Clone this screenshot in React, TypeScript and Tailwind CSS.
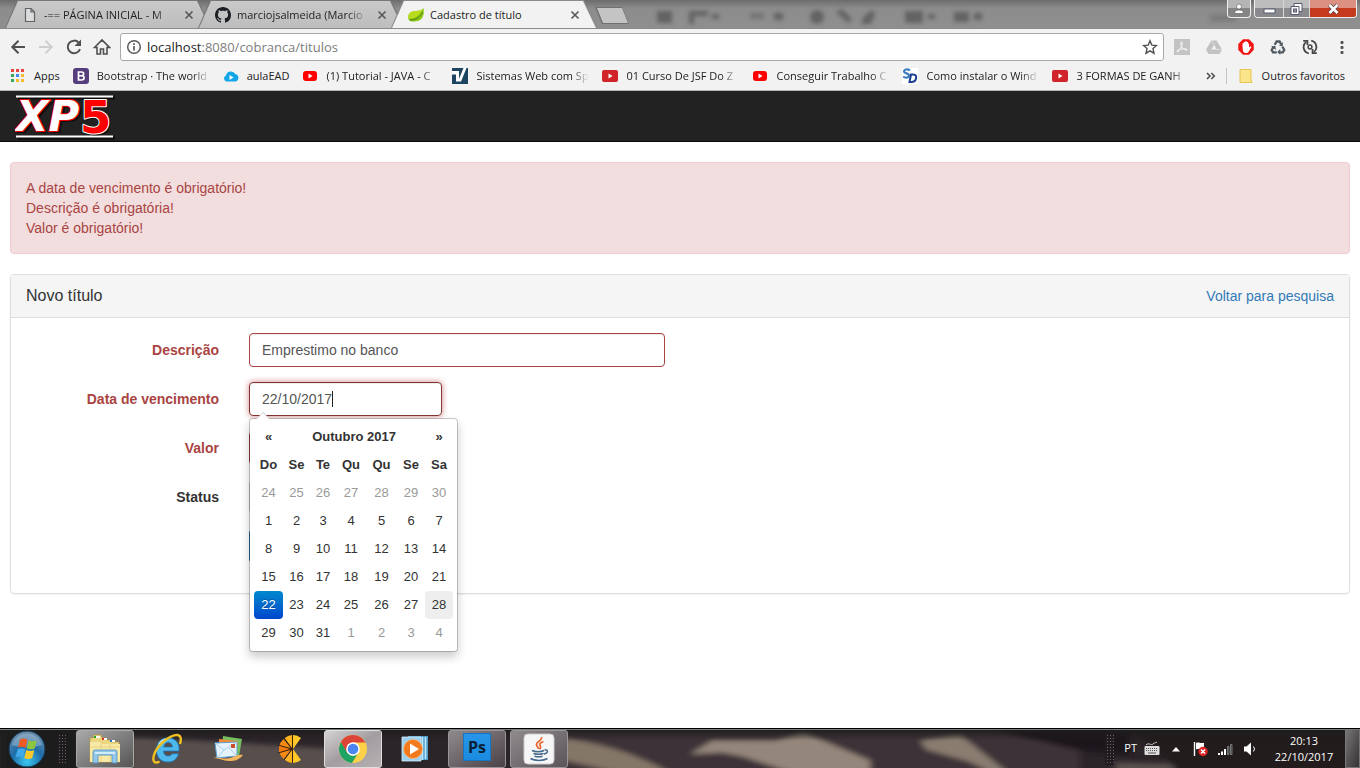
import React from "react";

const YouTube = ({ dark = false }: { dark?: boolean }) => (
  <svg width="16" height="16" viewBox="0 0 16 16" aria-hidden="true">
    <rect x={dark ? 0 : 1} y={dark ? 2 : 3} width={dark ? 16 : 14} height={dark ? 12 : 10} rx={dark ? 2 : 3} fill={dark ? "#d0242a" : "#f00"} />
    <path d="M6.5 5.5 10.6 8 6.5 10.5z" fill="#fff" />
  </svg>
);

const BootstrapIcon = () => (
  <svg width="16" height="16" viewBox="0 0 16 16" aria-hidden="true">
    <rect width="16" height="16" rx="3" fill="#563d7c" />
    <path
      d="M5.5 4h3c1.4 0 2.2.6 2.2 1.8 0 .9-.6 1.5-1.3 1.8 1 .2 1.7.9 1.7 2 0 1.5-1.1 2.4-2.7 2.4H5.5z"
      fill="none"
      stroke="#fff"
      strokeWidth="1.7"
    />
    <path d="M5.5 7.7h3.5" stroke="#fff" strokeWidth="1.5" />
  </svg>
);

const CloudIcon = () => (
  <svg width="16" height="16" viewBox="0 0 16 16" aria-hidden="true">
    <path d="M3.2 13.500A3.200 3.200 0 0 1 3 7.500 5 5 0 0 1 12.300 6 3.900 3.900 0 0 1 12.800 13.500z" fill="#12a5e8" />
    <path d="M6.500 7 10.500 9.500 6.500 12z" fill="#fff" />
  </svg>
);

const VIcon = () => (
  <svg width="16" height="16" viewBox="0 0 16 16" aria-hidden="true">
    <rect width="16" height="16" fill="#1d4460" />
    <path d="M0 3h7v8L11.500 0H14.500L9 13.500H4V6.500H0z" fill="#fff" />
  </svg>
);

const SDIcon = () => (
  <svg width="16" height="16" viewBox="0 0 16 16" aria-hidden="true">
    <rect width="16" height="16" fill="#fff" />
    <path d="M8 2.500C6 .8 2 1.200 2 3.500s5 1.500 5 4-3.800 2.700-5.800 1" fill="none" stroke="#3f7fc0" strokeWidth="2.200" />
    <path d="M9 6.500h2c3 0 3.500 1.500 3 4s-2 3.500-4.500 3.500H7.500z" fill="none" stroke="#1c3f94" strokeWidth="2" />
  </svg>
);

const AppsIcon = () => (
  <svg width="16" height="16" viewBox="0 0 16 16" aria-hidden="true">
    {["#e8453c", "#e8453c", "#e8453c", "#3aa757", "#4688f1", "#f9bb2d", "#3aa757", "#f9bb2d", "#f9bb2d"].map((c, i) => (
      <rect key={i} x={1 + (i % 3) * 5} y={1 + Math.floor(i / 3) * 5} width="3" height="3" fill={c} />
    ))}
  </svg>
);

const CloseX = () => (
  <svg width="10" height="10" viewBox="0 0 10 10" aria-hidden="true">
    <path d="M1.500 1.500 8.500 8.500M8.500 1.500 1.500 8.500" stroke="#5a5a5a" strokeWidth="1.700" />
  </svg>
);

const PageIcon = () => (
  <svg width="16" height="16" viewBox="0 0 16 16" aria-hidden="true">
    <path d="M3.500 1.500h5.500l3.500 3.500v9.500h-9zM9 1.500V5h3.500" fill="#dcdcdc" stroke="#5f6368" strokeWidth="1.200" />
  </svg>
);

const GithubIcon = () => (
  <svg width="16" height="16" viewBox="0 0 16 16" aria-hidden="true">
    <path
      fill="#1b1f23"
      d="M8 0C3.580 0 0 3.580 0 8c0 3.540 2.290 6.530 5.470 7.590.4.070.55-.17.55-.38 0-.19-.010-.82-.010-1.490-2.010.37-2.530-.49-2.690-.94-.090-.23-.48-.94-.82-1.130-.28-.15-.68-.52-.010-.53.63-.010 1.080.58 1.230.82.72 1.210 1.870.87 2.330.66.070-.52.28-.87.51-1.070-1.780-.2-3.640-.89-3.640-3.950 0-.87.31-1.590.82-2.150-.080-.2-.36-1.020.080-2.120 0 0 .67-.21 2.200.82.64-.18 1.320-.27 2-.27s1.360.090 2 .27c1.530-1.040 2.200-.82 2.200-.82.44 1.100.16 1.920.080 2.120.51.56.82 1.270.82 2.150 0 3.070-1.870 3.750-3.650 3.950.29.25.54.73.54 1.480 0 1.070-.010 1.930-.010 2.200 0 .21.15.46.55.38A8.010 8.010 0 0 0 16 8c0-4.420-3.580-8-8-8z"
    />
  </svg>
);

const LeafIcon = () => (
  <svg width="16" height="16" viewBox="0 0 16 16" aria-hidden="true">
    <path d="M15.500 1C16.500 8 15 14 7 14.500 1 15 0 12.500.3 9.500.8 5.500 4 4 8 4c3.500 0 6-.8 7.500-3z" fill="#8cc614" />
    <path d="M15.500 1C14 3.200 11.500 4 8 4 4 4 .8 5.500.3 9.500l.2 2C6 12 12 9 15.500 1z" fill="#b9dc1f" />
    <path d="M2 13C8 13 12.500 10 14.500 5" stroke="#4e7d12" fill="none" />
  </svg>
);

type TabProps = { icon: React.ReactNode; title: string; active?: boolean; first?: boolean };

const Tab = ({ icon, title, active, first }: TabProps) => (
  <div
    className={`relative h-[28px] w-[206px] shrink-0 px-px pt-px [clip-path:polygon(0_100%,12px_0,193px_0,100%_100%)] ${
      first ? "" : "-ml-[13px]"
    } ${active ? "z-10 bg-[#8a8a8a]" : "bg-[#777]"}`}
  >
    <div
      className={`flex h-full items-center gap-[6px] pl-[16px] pr-[16px] [clip-path:polygon(0_100%,12px_0,191px_0,100%_100%)] ${
        active ? "bg-[#f2f2f2]" : "bg-gradient-to-b from-[#c9c9c9] to-[#bdbdbd]"
      }`}
    >
      <span className="shrink-0">{icon}</span>
      <span
        className={`w-[132px] shrink-0 whitespace-nowrap text-[11px] leading-4 text-[#222] ${
          active ? "" : "[mask-image:linear-gradient(to_right,black_84%,transparent)]"
        }`}
      >
        {title}
      </span>
      <button type="button" aria-label="Fechar guia" className="ml-auto shrink-0">
        <CloseX />
      </button>
    </div>
  </div>
);

const WindowControls = () => (
  <div className="flex items-start gap-[3px] pr-[3px]">
    <button type="button" aria-label="Perfil" className="flex h-[18px] w-[24px] items-center justify-center rounded-b-[4px] border border-t-0 border-[#f0f0f0] bg-gradient-to-b from-[#b5b5b5] from-50% to-[#858585] to-50%">
      <svg width="12" height="12" viewBox="0 0 12 12" aria-hidden="true">
        <path d="M6 1a2.400 2.400 0 0 1 2.400 2.500C8.400 5 7.500 6 6 6S3.600 5 3.600 3.500A2.400 2.400 0 0 1 6 1zM1.500 10.500C1.500 8 3 7 6 7s4.500 1 4.500 3.500z" fill="#fff" stroke="#555" strokeWidth=".6" />
      </svg>
    </button>
    <div className="flex h-[18px] overflow-hidden rounded-b-[4px] border border-t-0 border-[#f0f0f0]">
      <button type="button" aria-label="Minimizar" className="flex w-[28px] items-center justify-center bg-gradient-to-b from-[#bdbdbd] from-50% to-[#8a8a8e] to-50%">
        <svg width="13" height="12" viewBox="0 0 13 12" aria-hidden="true">
          <rect x="1" y="6" width="11" height="4" fill="#fff" stroke="#555a70" />
        </svg>
      </button>
      <button type="button" aria-label="Restaurar" className="flex w-[27px] items-center justify-center border-x border-[#d8d8d8] bg-gradient-to-b from-[#bdbdbd] from-50% to-[#8a8a8e] to-50%">
        <svg width="13" height="12" viewBox="0 0 13 12" aria-hidden="true">
          <path d="M4 .5h8v8H4z" fill="#fff" stroke="#555a70" />
          <path d="M1 3.500h8v8H1z" fill="#fff" stroke="#555a70" />
          <rect x="3.500" y="6" width="3" height="3" fill="#999" stroke="#555a70" />
        </svg>
      </button>
      <button type="button" aria-label="Fechar" className="flex w-[46px] items-center justify-center bg-gradient-to-b from-[#dc9082] from-50% to-[#c5391c] to-50%">
        <svg width="13" height="12" viewBox="0 0 13 12" aria-hidden="true">
          <path d="M2.500 2 10.500 10M10.500 2 2.500 10" stroke="#5b4450" strokeWidth="4" />
          <path d="M2.500 2 10.500 10M10.500 2 2.500 10" stroke="#fff" strokeWidth="2.500" />
        </svg>
      </button>
    </div>
  </div>
);

const TabStrip = () => (
  <div className="relative flex h-[29px] items-end overflow-hidden border-b border-[#8a8a8a] bg-gradient-to-b from-[#6d6d6d] via-[#8c8c8c] via-30% to-[#8f8f8f]">
    <svg className="absolute left-[590px] top-0" width="660" height="28" viewBox="0 0 660 28" aria-hidden="true">
      <defs>
        <filter id="haze" x="-10%" y="-50%" width="120%" height="200%">
          <feGaussianBlur stdDeviation="2.200" />
        </filter>
      </defs>
      <g filter="url(#haze)" fill="#555" opacity=".75">
        <path d="M67 11h15v12H67zM315 11h18v12h-18zM364 12h15v10h-15z" />
        <path d="M99 11h19v5h-14v8h-5zM122 14h7v5h-7zM184 13h9v7h-9zM338 14h7v5h-7zM384 13h8v7h-8z" />
        <circle cx="227" cy="17" r="7" />
        <path d="m246 12 12 11 4-4-10-10zM272 19l9-9 4 3-4 11h-9z" />
        <path d="M160 13h14v6h-14z" opacity=".6" />
        <path d="M620 14h26v8h-26z" opacity=".4" />
      </g>
    </svg>
    <div className="relative flex h-[28px] pl-[5px]">
      <Tab first icon={<PageIcon />} title="-== PÁGINA INICIAL - M" />
      <Tab icon={<GithubIcon />} title="marciojsalmeida (Marcio" />
      <Tab active icon={<LeafIcon />} title="Cadastro de título" />
    </div>
    <button type="button" aria-label="Nova guia" className="relative -ml-[2px] mb-[4px] h-[17px] w-[34px] bg-[#707070] p-px [clip-path:polygon(0_0,27px_0,100%_100%,7px_100%)]">
      <span className="block h-full w-full bg-[#c4c4c4] [clip-path:polygon(1px_0,26px_0,100%_100%,7px_100%)]" />
    </button>
    <div className="relative ml-auto self-start">
      <WindowControls />
    </div>
  </div>
);

const iconBtn = "flex h-[18px] w-[18px] items-center justify-center";

const Toolbar = () => (
  <div className="flex h-[36px] items-center bg-[#f2f2f2] px-[9px]">
    <div className="flex items-center gap-[10px]">
      <button type="button" aria-label="Voltar" className={iconBtn}>
        <svg width="18" height="18" viewBox="0 0 18 18" fill="none" stroke="#505050" strokeWidth="2" aria-hidden="true">
          <path d="M16 9H3.500M9.500 2.800 3.300 9l6.200 6.200" />
        </svg>
      </button>
      <button type="button" aria-label="Avançar" className={iconBtn}>
        <svg width="18" height="18" viewBox="0 0 18 18" fill="none" stroke="#cfcfcf" strokeWidth="2" aria-hidden="true">
          <path d="M2 9h12.500M8.500 2.800 14.700 9l-6.200 6.200" />
        </svg>
      </button>
      <button type="button" aria-label="Recarregar" className={iconBtn}>
        <svg width="18" height="18" viewBox="0 0 18 18" fill="none" stroke="#505050" strokeWidth="2" aria-hidden="true">
          <path d="M15 11.200A6.300 6.300 0 1 1 13.800 4.700" />
          <path d="M16 1.500V8H9.500z" fill="#505050" stroke="none" />
        </svg>
      </button>
      <button type="button" aria-label="Página inicial" className={iconBtn}>
        <svg width="18" height="18" viewBox="0 0 18 18" fill="none" stroke="#505050" strokeWidth="1.600" aria-hidden="true">
          <path d="M1.500 9.500 9 2l7.500 7.500H14V16h-3.500v-5h-3v5H4V9.500z" />
        </svg>
      </button>
    </div>
    <div className="ml-[9px] flex h-[28px] min-w-0 flex-1 items-center rounded-[3px] border border-[#a9a9a9] bg-white px-[5px]">
      <svg width="16" height="16" viewBox="0 0 16 16" fill="none" stroke="#5a5a5a" strokeWidth="1.500" aria-hidden="true">
        <circle cx="8" cy="8" r="6.300" />
        <path d="M8 7v4.500M8 4.300v1.600" strokeWidth="1.700" />
      </svg>
      <a href="#" className="ml-[5px] text-[13px] leading-5 text-[#7d7d7d]">
        <span className="text-[#222]">localhost</span>:8080/cobranca/titulos
      </a>
      <button type="button" aria-label="Adicionar aos favoritos" className="ml-auto">
        <svg width="16" height="16" viewBox="0 0 16 16" fill="none" stroke="#505050" strokeWidth="1.400" aria-hidden="true">
          <path d="m8 1.800 1.800 4.300 4.700.4-3.500 3.100 1 4.600L8 11.800l-4 2.400 1-4.600-3.500-3.100 4.700-.4z" />
        </svg>
      </button>
    </div>
    <div className="ml-[9px] flex items-center gap-[14px]">
      <button type="button" aria-label="PDF" className={iconBtn}>
        <svg width="16" height="16" viewBox="0 0 16 16" aria-hidden="true">
          <rect width="16" height="16" fill="#c3c3c3" />
          <path d="M7.500 3c1.500 0 .5 4-1 6.500S3 13.500 3 12.500s3-2.500 6-2.800 4.500.5 4 1.200-4-.5-5.200-3S6.500 3 7.500 3z" fill="none" stroke="#eee" strokeWidth="1.100" />
        </svg>
      </button>
      <button type="button" aria-label="Drive" className={iconBtn}>
        <svg width="16" height="16" viewBox="0 0 16 16" aria-hidden="true">
          <path d="M5.500 1.500h5L16 10.500 13.500 15h-11L0 10.500z" fill="#c2c2c2" />
          <path d="m8 5.500 2.800 5H5.300z" fill="#eee" />
          <path d="M5.300 10.500H16M8 5.500l-2.500-4" stroke="#dcdcdc" fill="none" />
        </svg>
      </button>
      <button type="button" aria-label="Bloqueador" className={iconBtn}>
        <svg width="16" height="16" viewBox="0 0 16 16" aria-hidden="true">
          <path d="M5 .3h6L15.700 5v6L11 15.700H5L.3 11V5z" fill="#f01414" />
          <path d="M4.500 7.500V4.300h1.200V3h1.400V2.300h1.500V3H10v1.500h1v4l1.500-1.300 1 .5-3 5.300L9 14H7l-2-1.500z" fill="#fff" />
        </svg>
      </button>
      <button type="button" aria-label="Reciclar" className={iconBtn}>
        <svg width="16" height="16" viewBox="0 0 16 16" fill="none" stroke="#505a62" strokeWidth="2.300" aria-hidden="true">
          <path d="M4.700 5.800 6.600 2.500h3l1.500 2.800M12.300 7.500l2 3.500-1.500 2.300H9.500M6.800 13.300H3L1.700 11l2-3.300" />
          <path d="M12.800 3v4H9zM10.300 10v6L7.200 13zM1 7.500l4.300-.8L6 11z" fill="#505a62" stroke="none" />
        </svg>
      </button>
      <button type="button" aria-label="Sincronizar" className={iconBtn}>
        <svg width="16" height="16" viewBox="0 0 16 16" fill="none" stroke="#484848" strokeWidth="1.800" aria-hidden="true">
          <path d="M6.800 14.300A6.400 6.400 0 0 1 4.200 2.900M9.200 1.700A6.400 6.400 0 0 1 11.800 13.100" />
          <path d="M1.200 1.800H5.400V6M14.800 14.200H10.600V10" />
          <circle cx="8" cy="8" r="1.900" strokeWidth="1.500" />
        </svg>
      </button>
      <button type="button" aria-label="Menu" className={iconBtn}>
        <svg width="16" height="16" viewBox="0 0 16 16" fill="#505050" aria-hidden="true">
          <rect x="6.500" y="2" width="3" height="3" rx="1" />
          <rect x="6.500" y="7" width="3" height="3" rx="1" />
          <rect x="6.500" y="12" width="3" height="3" rx="1" />
        </svg>
      </button>
    </div>
  </div>
);

const bookmarks: { label: string; icon: React.ReactNode; short?: boolean }[] = [
  { label: "Bootstrap · The world", icon: <BootstrapIcon /> },
  { label: "aulaEAD", icon: <CloudIcon />, short: true },
  { label: "(1) Tutorial - JAVA - C", icon: <YouTube /> },
  { label: "Sistemas Web com Sp", icon: <VIcon /> },
  { label: "01 Curso De JSF Do Z", icon: <YouTube dark /> },
  { label: "Conseguir Trabalho C", icon: <YouTube /> },
  { label: "Como instalar o Wind", icon: <SDIcon /> },
  { label: "3 FORMAS DE GANH", icon: <YouTube dark /> },
];

const BookmarksBar = () => (
  <div className="flex h-[26px] items-center gap-[13px] whitespace-nowrap border-b border-[#b6b4b6] bg-[#f2f2f2] pb-[4px] pl-[10px] pr-[15px] text-[11px] leading-4 text-[#222]">
    <a href="#" className="flex shrink-0 items-center gap-[8px]">
      <AppsIcon />
      <span>Apps</span>
    </a>
    {bookmarks.map((b) => (
      <a key={b.label} href="#" className="flex shrink-0 items-center gap-[8px]">
        {b.icon}
        <span className={b.short ? "" : "w-[113px] [mask-image:linear-gradient(to_right,black_84%,transparent)]"}>
          {b.label}
        </span>
      </a>
    ))}
    <div className="ml-auto flex shrink-0 items-center">
      <button type="button" aria-label="Mais favoritos">
        <svg width="10" height="10" viewBox="0 0 10 10" fill="none" stroke="#505050" strokeWidth="1.600" aria-hidden="true">
          <path d="m1 2 3 3-3 3M5.300 2l3 3-3 3" />
        </svg>
      </button>
      <span className="ml-[10px] h-[16px] w-px bg-[#c4c4c4]" />
      <a href="#" className="ml-[11px] flex items-center gap-[8px]">
        <svg width="16" height="16" viewBox="0 0 16 16" aria-hidden="true">
          <path d="M2 1.500h11v10l1 3H2z" fill="#fbe58b" stroke="#e6c553" />
        </svg>
        <span>Outros favoritos</span>
      </a>
    </div>
  </div>
);

const Logo = () => (
  <svg width="104" height="46" viewBox="0 0 104 46" role="img" aria-label="XP5">
    <path d="M3 4h97M3 44h97" stroke="#000" strokeWidth="3" opacity=".6" />
    <path d="M1 2.500h97M1 42.500h97" stroke="#fff" strokeWidth="2" />
    <g fontFamily="DejaVu Sans, sans-serif" fontWeight="700" paintOrder="stroke" strokeLinejoin="round">
      <text x="4" y="39" fontSize="42" fontStyle="italic" fill="#000" opacity=".6">XP</text>
      <text x="1" y="37" fontSize="42" fontStyle="italic" fill="#fff" stroke="#e00" strokeWidth="2">XP</text>
      <text x="67" y="41" fontSize="45" fill="#000" opacity=".6">5</text>
      <text x="65" y="39" fontSize="45" fill="#f00" stroke="#fff" strokeWidth="2">5</text>
    </g>
  </svg>
);

type Cell = { d: number; out?: boolean };
const sequence: Cell[] = [
  ...[24, 25, 26, 27, 28, 29, 30].map((d) => ({ d, out: true })),
  ...Array.from({ length: 31 }, (_, i) => ({ d: i + 1 })),
  ...[1, 2, 3, 4].map((d) => ({ d, out: true })),
];
const weeks = Array.from({ length: 6 }, (_, w) => sequence.slice(w * 7, w * 7 + 7));

const dayTone = (c: Cell) => {
  if (c.out) return "text-[#999]";
  if (c.d === 22) return "bg-gradient-to-b from-[#0088cc] to-[#0044cc] text-white [text-shadow:0_-1px_0_rgba(0,0,0,0.25)]";
  if (c.d === 28) return "bg-[#eee] text-[#333]";
  return "text-[#333]";
};

const DatePicker = () => (
  <div className="absolute left-0 top-full z-20 mt-[2px] rounded-[4px] border border-black/20 bg-white bg-clip-padding p-[4px] shadow-[0_5px_10px_rgba(0,0,0,0.2)]">
    <span className="absolute -top-[7px] left-[6px] h-0 w-0 border-x-[7px] border-b-[7px] border-x-transparent border-b-[#ccc]" />
    <span className="absolute -top-[6px] left-[7px] h-0 w-0 border-x-[6px] border-b-[6px] border-x-transparent border-b-white" />
    <table className="w-[199px] table-fixed border-collapse text-center text-[13px] leading-5 text-[#333]">
      <colgroup>
        <col className="w-[29px]" />
        <col className="w-[27px]" />
        <col className="w-[26px]" />
        <col className="w-[30px]" />
        <col className="w-[31px]" />
        <col className="w-[28px]" />
        <col className="w-[28px]" />
      </colgroup>
      <thead>
        <tr className="h-[28px]">
          <th className="p-0"><button type="button" className="font-bold" aria-label="Mês anterior">«</button></th>
          <th colSpan={5} className="p-0 font-bold">Outubro 2017</th>
          <th className="p-0"><button type="button" className="font-bold" aria-label="Próximo mês">»</button></th>
        </tr>
        <tr className="h-[28px]">
          {["Do", "Se", "Te", "Qu", "Qu", "Se", "Sa"].map((d, i) => (
            <th key={i} className="p-0 font-bold">{d}</th>
          ))}
        </tr>
      </thead>
      <tbody>
        {weeks.map((w, i) => (
          <tr key={i}>
            {w.map((c, j) => (
              <td key={j} className="p-0">
                <button type="button" className={`block h-[28px] w-full rounded-[4px] ${dayTone(c)}`}>{c.d}</button>
              </td>
            ))}
          </tr>
        ))}
      </tbody>
    </table>
  </div>
);

const labelCls = "w-1/6 shrink-0 pr-[15px] pt-[7px] text-right font-bold";
const inputCls = "block h-[34px] w-full rounded-[4px] border px-[12px] text-[14px] text-[#555] shadow-[inset_0_1px_1px_rgba(0,0,0,0.075)] outline-none";

const Page = () => (
  <main className="flex-1 bg-white font-['Liberation_Sans',Arial,sans-serif] text-[14px] leading-5 text-[#333]">
    <nav className="mb-[20px] flex h-[51px] items-start border-b border-[#080808] bg-[#222] pl-[15px] pt-[3px]">
      <a href="#"><Logo /></a>
    </nav>
    <div className="px-[10px]">
      <div role="alert" className="mb-[20px] rounded-[4px] border border-[#ebccd1] bg-[#f2dede] p-[15px] text-[#a94442]">
        <p>A data de vencimento é obrigatório!</p>
        <p>Descrição é obrigatória!</p>
        <p>Valor é obrigatório!</p>
      </div>
      <section className="rounded-[4px] border border-[#ddd] shadow-[0_1px_1px_rgba(0,0,0,0.05)]">
        <header className="flex h-[43px] items-center justify-between rounded-t-[3px] border-b border-[#ddd] bg-[#f5f5f5] px-[15px]">
          <h1 className="text-[16px]">Novo título</h1>
          <a href="#" className="text-[#337ab7]">Voltar para pesquisa</a>
        </header>
        <form className="flex flex-col gap-[15px] pb-[26px] pt-[15px]">
          <div className="flex">
            <label htmlFor="descricao" className={`${labelCls} text-[#a94442]`}>Descrição</label>
            <div className="w-1/3 px-[15px]">
              <input id="descricao" defaultValue="Emprestimo no banco" className={`${inputCls} border-[#a94442]`} />
            </div>
          </div>
          <div className="flex">
            <label htmlFor="vencimento" className={`${labelCls} text-[#a94442]`}>Data de vencimento</label>
            <div className="w-1/6 px-[15px]">
              <div className="relative">
                <input
                  id="vencimento"
                  defaultValue="22/10/2017"
                  className="block h-[34px] w-full rounded-[4px] border border-[#843534] px-[12px] text-[14px] text-[#555] shadow-[inset_0_1px_1px_rgba(0,0,0,0.075),0_0_6px_#ce8483] outline-none"
                />
                <span className="absolute left-[83px] top-[9px] h-[16px] w-px bg-[#222]" />
                <DatePicker />
              </div>
            </div>
          </div>
          <div className="flex">
            <label htmlFor="valor" className={`${labelCls} text-[#a94442]`}>Valor</label>
            <div className="w-1/6 px-[15px]">
              <input id="valor" className={`${inputCls} border-[#a94442]`} />
            </div>
          </div>
          <div className="flex">
            <label htmlFor="status" className={labelCls}>Status</label>
            <div className="w-1/6 px-[15px]">
              <select id="status" className={`${inputCls} border-[#ccc] bg-white`} />
            </div>
          </div>
          <div className="flex">
            <div className="ml-[16.6667%] px-[15px]">
              <button type="submit" aria-label="Salvar" className="h-[34px] w-[66px] rounded-[4px] border border-[#2e6da4] bg-[#337ab7]" />
            </div>
          </div>
        </form>
      </section>
    </div>
  </main>
);

const ExplorerIcon = () => (
  <svg width="34" height="32" viewBox="0 0 34 32" aria-hidden="true">
    <path d="M2 5h3l1-3h7l1 3h4l1 2h4l1 2h7v20H2z" fill="#ecd680" stroke="#b99a3e" strokeWidth=".7" />
    <path d="M7 3h5v2H7zM14 5h5v2h-5zM22 7h5v2h-5z" fill="#fff" />
    <path d="M6 3h2v2H6z" fill="#2a2" /><path d="M14 5h2v2h-2z" fill="#d33" /><path d="M22 7h2v2h-2z" fill="#27c" />
    <path d="M2 9h10l1 2h19v18H2z" fill="#f8eaa6" />
    <path d="M13 11v18M22 11v18M2 14h30" stroke="#e2cd7a" strokeWidth=".8" />
    <path d="M5 30V19q0-2 2-2h20q2 0 2 2v11h-5v-8H10v8z" fill="#93c8ea" stroke="#4d8fc0" strokeWidth=".8" />
    <path d="M7 19h20v2H7z" fill="#d3ecfa" />
  </svg>
);

const IEIcon = () => (
  <svg width="32" height="32" viewBox="0 0 32 32" aria-hidden="true">
    <path d="M28 18H12.500c.3 3.500 2 5 4.500 5 2 0 3.300-.8 4-2.200h6.500C26 26 22.500 29 17 29c-7 0-11.500-4.500-11.500-12S10 5 17 5c7.500 0 11.500 5 11 13zM12.700 14h8.800c-.2-3-1.700-4.500-4.300-4.500S13.200 11 12.700 14z" fill="#4fb9ee" stroke="#1c7cc0" strokeWidth=".8" />
    <path d="M8 11C10 7.500 13 6 17 6" fill="none" stroke="#b6e5fb" strokeWidth="1.500" />
    <path d="M29 11c1.500-5 1-9-3-9C19 2 6 12 3 22c-2 7 1 9 5.500 6.500" fill="none" stroke="#f0c020" strokeWidth="2.400" />
  </svg>
);

const MailIcon = () => (
  <svg width="32" height="30" viewBox="0 0 32 30" aria-hidden="true">
    <path d="m10 2 19 3-3 17-17-4z" fill="#74bf60" />
    <path d="m6 5 19 2-2 16-17-3z" fill="#f08a38" />
    <path d="m2 9 22-1v14L4 24z" fill="#e5f2fb" stroke="#5a9fd0" />
    <path d="m2 9 9 7 13-8M4 24l7-8M24 22l-8-8" fill="none" stroke="#a9d0ec" />
    <path d="M18 10h4v4h-4z" fill="#c8502c" />
    <path d="M0 24c6-2 10 2 17 0 5-1.500 8-4 13-3-4 5-8 6-14 6-6 0-9-3-16-3z" fill="#f4b45c" />
  </svg>
);

const OrangeIcon = () => (
  <svg width="28" height="32" viewBox="0 0 28 32" aria-hidden="true">
    <path d="M16 16 24 5A14 14 0 0 0 16 2zM16 16 24 27A14 14 0 0 1 16 30z" fill="#ffc828" />
    <path d="M15 15V2a14 14 0 0 0-7.500 3.200zM15 17v13a14 14 0 0 1-7.500-3.200z" fill="#fdb320" />
    <path d="M14 15 6.500 6A14 14 0 0 0 2 14zM14 17 6.500 26A14 14 0 0 1 2 18z" fill="#f58a14" />
    <path d="M13 15.500 2 12.500v7l11-3z" fill="#f07c10" />
    <path d="M15.500 16V2M15 16 7 5M15 16 1 12M15 16 1 20M15 16 7 27M15.500 16v14" stroke="#3a2010" strokeWidth="1" />
  </svg>
);

const ChromeIcon = () => (
  <svg width="30" height="30" viewBox="0 0 30 30" aria-hidden="true">
    <circle cx="15" cy="15" r="14" fill="#fdd24a" />
    <path d="M2.880 8A14 14 0 0 0 14 29L20.600 18.300A6.500 6.500 0 0 1 9.400 18.300z" fill="#1da362" />
    <path d="M2.880 8 9 18.500 15 8.500h12.300A14 14 0 0 0 2.880 8z" fill="#dc4437" />
    <circle cx="15" cy="15" r="6.800" fill="#fff" />
    <circle cx="15" cy="15" r="5.300" fill="#4a86ef" />
  </svg>
);

const PlayerIcon = () => (
  <svg width="30" height="28" viewBox="0 0 30 28" aria-hidden="true">
    <path d="M8 1h20v24H8z" fill="#4d9fce" />
    <path d="M25.500 2v22M22.500 2v23" stroke="#c5e8f8" strokeWidth="1.500" />
    <path d="M2 2h19v24H2z" fill="#9dd0ee" stroke="#d6effb" strokeWidth=".8" />
    <circle cx="13" cy="14" r="9.500" fill="#f37a1c" stroke="#ffb878" strokeWidth=".8" />
    <path d="M10 8.500 19 14l-9 5.500z" fill="#fff" />
  </svg>
);

const PsIcon = () => (
  <span className="mb-[4px] flex h-[28px] w-[28px] items-center justify-center border border-[#1674c4] bg-gradient-to-b from-[#2796e8] to-[#1a8be0] font-['Open_Sans',sans-serif] text-[16px] font-bold leading-5 text-[#0a1f38]">
    Ps
  </span>
);

const JavaIcon = () => (
  <svg width="32" height="32" viewBox="0 0 32 32" aria-hidden="true">
    <rect x="1" y="1" width="30" height="30" rx="4" fill="#f6f6f6" stroke="#ccc" />
    <path d="M18.500 4c1.500 3-6 5-5 8 .5 1.500 2 2.500 2 4M20.500 8.500c-3 1-4.500 2.500-3.500 4s1 2.500-.5 3.500" fill="none" stroke="#e8642c" strokeWidth="1.700" />
    <path d="M9 17.500c3 1.500 9 1.500 12 0M10.500 20.500c3 1 7 1 10 0M11.500 23.200c2.500.8 5.500.8 8 0M21.500 17c4-1 4 3-.5 4M7.500 25.500c4 2.500 13 2.500 17 0" fill="none" stroke="#44698c" strokeWidth="1.500" />
  </svg>
);

const StartOrb = () => (
  <svg width="38" height="38" viewBox="0 0 38 38" aria-hidden="true">
    <defs>
      <radialGradient id="orb" cx="50%" cy="85%" r="85%">
        <stop offset="0" stopColor="#3cc8f0" />
        <stop offset=".5" stopColor="#1e6ca8" />
        <stop offset="1" stopColor="#6f8fa8" />
      </radialGradient>
    </defs>
    <circle cx="19" cy="19" r="18" fill="url(#orb)" stroke="#14344c" />
    <path d="M4 15a15.500 15.500 0 0 1 30 0c-9 3-21 3-30 0z" fill="#fff" opacity=".25" />
    <path d="M12 9.500c3-1.500 5-1.200 7.500.2L17.500 18c-2.500-1.500-5-1.500-7.500-.3z" fill="#ee5a24" />
    <path d="M20.700 10.300c2.500 1.300 5 1.300 8 .2l-2 8c-2.800 1.200-5.500 1-8 0z" fill="#8cc63e" />
    <path d="M9.700 19c2.800-1.200 5.200-1 7.500.3L15 27.500c-2.500-1.300-4.800-1.300-7.500-.2z" fill="#3fa9ec" />
    <path d="M18.300 20c2.500 1.200 5 1.300 8 .2l-2.200 8c-2.800 1-5.300 1-7.800-.2z" fill="#fcc92c" />
  </svg>
);

const tasks: { name: string; icon: React.ReactNode; look: string }[] = [
  { name: "Explorador", icon: <ExplorerIcon />, look: "border-[#a9a9a9] bg-gradient-to-br from-[#aaa] to-[#555]" },
  { name: "Internet Explorer", icon: <IEIcon />, look: "border-transparent" },
  { name: "Mail", icon: <MailIcon />, look: "border-transparent" },
  { name: "Clementine", icon: <OrangeIcon />, look: "border-transparent" },
  { name: "Chrome", icon: <ChromeIcon />, look: "border-[#dedede] bg-gradient-to-br from-[#d5d3d3] via-[#a39da1] to-[#b5b0b2]" },
  { name: "Media Player", icon: <PlayerIcon />, look: "border-transparent" },
  { name: "Photoshop", icon: <PsIcon />, look: "border-[#99959a] bg-gradient-to-br from-[#8f8b8d] to-[#4b4248]" },
  { name: "Java", icon: <JavaIcon />, look: "border-[#99959a] bg-gradient-to-br from-[#8f8b8d] to-[#5b5459]" },
];

const Grip = () => (
  <span className="h-[32px] w-[9px] bg-[linear-gradient(to_right,#1f1b1e_2px,transparent_2px),linear-gradient(to_bottom,#1f1b1e_2px,#6a666a_2px)] bg-[length:3px_3px]" />
);

const Taskbar = () => (
  <footer className="relative flex h-[40px] shrink-0 items-center overflow-hidden border-t border-black bg-[#2b2429] text-white">
    <svg className="absolute inset-0 h-full w-full" viewBox="0 0 1360 40" preserveAspectRatio="none" aria-hidden="true">
      <defs>
        <filter id="soft" x="-5%" y="-40%" width="110%" height="180%">
          <feGaussianBlur stdDeviation="3" />
        </filter>
        <linearGradient id="shade" x1="0" y1="0" x2="0" y2="1">
          <stop offset="0" stopColor="#1c1c1c" stopOpacity=".9" />
          <stop offset=".3" stopColor="#1c1c1c" stopOpacity="0" />
        </linearGradient>
      </defs>
      <g filter="url(#soft)">
        <path d="M0 0h80v45H0z" fill="#1d1a1c" />
        <path d="M130 8l70 4 130 8 60 25H130z" fill="#584f4e" />
        <path d="M560 0h520v45H560z" fill="#3d3239" />
        <path d="M565 10c30 4 65 12 105 35h-50l-60-14z" fill="#857768" />
        <path d="M690 26 712 12h64l28-8 66 28v14h-74l-54-18-20-4z" fill="#94867a" />
        <path d="M920 12 960 6l48 39h-15l-25-12-42-12z" fill="#8a7d70" />
        <path d="M990 0h140v28L1080 22z" fill="#1c191b" />
        <path d="M1115 34l60 2v8h-60z" fill="#5a5350" />
        <path d="M1130 0h230v45h-180z" fill="#241b1e" />
      </g>
      <rect width="1360" height="40" fill="url(#shade)" />
      <path d="M0 .5h1360" stroke="#7f8482" />
    </svg>
    <div className="relative flex h-full items-center pl-[8px]">
      <button type="button" aria-label="Iniciar"><StartOrb /></button>
      <span className="ml-[11px] flex"><Grip /></span>
      <div className="ml-[10px] flex gap-[4px]">
        {tasks.map((t) => (
          <button key={t.name} type="button" aria-label={t.name} className={`flex h-[38px] w-[58px] items-center justify-center rounded-[3px] border ${t.look}`}>
            {t.icon}
          </button>
        ))}
      </div>
    </div>
    <div className="relative ml-auto flex h-full items-center text-[11px]">
      <Grip />
      <span className="ml-[10px]">PT</span>
      <svg className="ml-[7px]" width="16" height="16" viewBox="0 0 16 16" aria-hidden="true">
        <path d="M2 4c3-3 5 1 7-1s3-1 4-2" fill="none" stroke="#ccc" />
        <rect x=".5" y="5" width="15" height="9" rx="1" fill="#ddd" />
        <path d="M2 7.500h12M2 9.500h12" stroke="#555" strokeDasharray="1 1" />
        <path d="M4 12h8" stroke="#555" />
      </svg>
      <button type="button" aria-label="Mostrar ícones ocultos" className="ml-[12px]">
        <svg width="8" height="16" viewBox="0 0 8 16" aria-hidden="true"><path d="M4 6 8 10.500H0z" fill="#fff" /></svg>
      </button>
      <svg className="ml-[13px]" width="16" height="16" viewBox="0 0 16 16" aria-hidden="true">
        <path d="M1.500 1v14" stroke="#fff" strokeWidth="1.400" />
        <path d="M3 2c3-1.500 4 1 8-.3V8C7 9.500 6 7 3 8.500z" fill="#fff" />
        <circle cx="10" cy="10.500" r="4.700" fill="#dc2424" />
        <path d="m8 8.500 4 4m0-4-4 4" stroke="#fff" strokeWidth="1.500" />
      </svg>
      <svg className="ml-[9px]" width="16" height="16" viewBox="0 0 16 16" aria-hidden="true">
        <path d="M0 12h2v2H0zM3 10.500h2V14H3zM6 8h2v6H6z" fill="#fff" />
        <path d="M9.500 5.500h1.500v8H9.500zM12.500 3.500H14v10h-1.500z" fill="#333" stroke="#999" strokeWidth=".7" />
      </svg>
      <svg className="ml-[9px]" width="16" height="16" viewBox="0 0 16 16" aria-hidden="true">
        <path d="M1 5.500h2.500L8 1.500v13L3.500 10.500H1z" fill="#fff" />
        <path d="M10.500 5.500q2 2.500 0 5" stroke="#fff" fill="none" />
      </svg>
      <time className="ml-[15px] block w-[60px] text-center leading-4">
        <span className="block">20:13</span>
        <span className="block">22/10/2017</span>
      </time>
      <button type="button" aria-label="Mostrar área de trabalho" className="ml-[11px] h-full w-[15px] border border-[#777] bg-gradient-to-br from-[#777] to-[#383234]" />
    </div>
  </footer>
);

export default function App() {
  return (
    <div className="flex min-h-screen flex-col bg-white font-['Open_Sans',sans-serif]">
      <div className="shrink-0">
        <TabStrip />
        <Toolbar />
        <BookmarksBar />
      </div>
      <Page />
      <Taskbar />
    </div>
  );
}
